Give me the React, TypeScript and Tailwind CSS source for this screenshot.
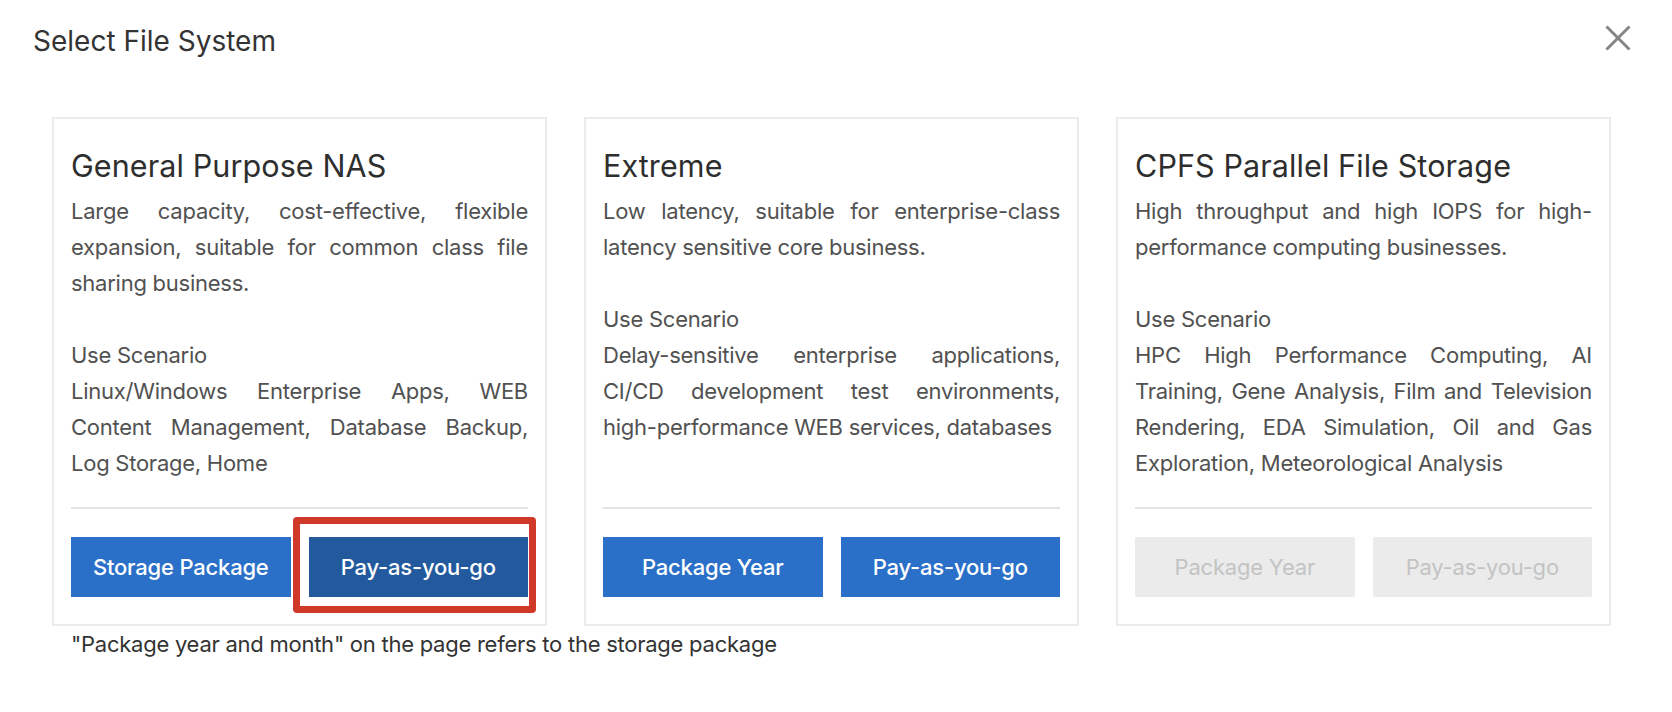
import type { ReactNode } from "react";

type Card = {
  title: string;
  desc: string;
  scenario: ReactNode;
  buttons: string[];
  disabled: boolean;
  highlight: boolean;
};

const cards: Card[] = [
  {
    title: "General Purpose NAS",
    desc: "Large capacity, cost-effective, flexible expansion, suitable for common class file sharing business.",
    scenario: "Linux/Windows Enterprise Apps, WEB Content Management, Database Backup, Log Storage, Home",
    buttons: ["Storage Package", "Pay-as-you-go"],
    disabled: false,
    highlight: true,
  },
  {
    title: "Extreme",
    desc: "Low latency, suitable for enterprise-class latency sensitive core business.",
    scenario: (
      <>
        Delay-sensitive enterprise applications, CI/CD development test environments,{" "}
        <span className="whitespace-nowrap">high-performance</span> WEB services, databases
      </>
    ),
    buttons: ["Package Year", "Pay-as-you-go"],
    disabled: false,
    highlight: false,
  },
  {
    title: "CPFS Parallel File Storage",
    desc: "High throughput and high IOPS for high-performance computing businesses.",
    scenario: "HPC High Performance Computing, AI Training, Gene Analysis, Film and Television Rendering, EDA Simulation, Oil and Gas Exploration, Meteorological Analysis",
    buttons: ["Package Year", "Pay-as-you-go"],
    disabled: true,
    highlight: false,
  },
];

function CloseIcon() {
  return (
    <svg width="26" height="26" viewBox="0 0 26 26" fill="none" stroke="#858585" strokeWidth="3">
      <path d="M1.5 1.5 L24.5 24.5" />
      <path d="M24.5 1.5 L1.5 24.5" />
    </svg>
  );
}

export default function App() {
  return (
    <div className="min-h-[712px] w-full bg-white font-['Inter','Liberation_Sans',sans-serif]">
      {/* header */}
      <div className="flex items-start justify-between pl-[33px] pr-[41px] pt-[24px]">
        <h2 className="text-[28px] leading-[34px] text-[#333333]">Select File System</h2>
        <button className="mt-[1px]" aria-label="close">
          <CloseIcon />
        </button>
      </div>

      {/* cards */}
      <div className="mt-[59px] flex gap-[37px] pl-[52px]">
        {cards.map((c) => (
          <div
            key={c.title}
            className="flex h-[509px] w-[495px] flex-col border-2 border-[#ececec] px-[17px] pt-[27px] pb-[27px]"
          >
            <h3 className="text-[30.5px] leading-[40px] text-[#2e2e2e] tracking-[0.1px]">{c.title}</h3>
            <div className="mt-[7px] flex-1 text-justify text-[22px] leading-[36px] tracking-[-0.25px] text-[#515151]">
              <p>{c.desc}</p>
              <p className="mt-[36px]">Use Scenario</p>
              <p>{c.scenario}</p>
            </div>
            <div className="h-[2px] bg-[#e3e3e3]" />
            <div className="mt-[28px] grid h-[60px] grid-cols-2 gap-[18px]">
              {c.buttons.map((b, i) => {
                if (c.disabled) {
                  return (
                    <button key={b} className="rounded-[2px] bg-[#ebebeb] text-[22px] tracking-[-0.2px] text-[#c3c3c3]">
                      {b}
                    </button>
                  );
                }
                const active = c.highlight && i === 1;
                return (
                  <div key={b} className="relative">
                    <button
                      className={
                        active
                          ? "h-full w-full bg-[#235a9e] text-[22px] font-medium tracking-[-0.2px] text-white"
                          : "h-full w-full bg-[#2b70c8] text-[22px] font-medium tracking-[-0.2px] text-white"
                      }
                    >
                      {b}
                    </button>
                    {active && (
                      <div className="pointer-events-none absolute -top-[20px] -right-[8px] -bottom-[16px] -left-[16px] rounded-[4px] border-[7px] border-[#d0382a]" />
                    )}
                  </div>
                );
              })}
            </div>
          </div>
        ))}
      </div>

      <p className="pl-[71px] text-[22px] leading-[36px] tracking-[-0.25px] text-[#333333]">
        "Package year and month" on the page refers to the storage package
      </p>
    </div>
  );
}
